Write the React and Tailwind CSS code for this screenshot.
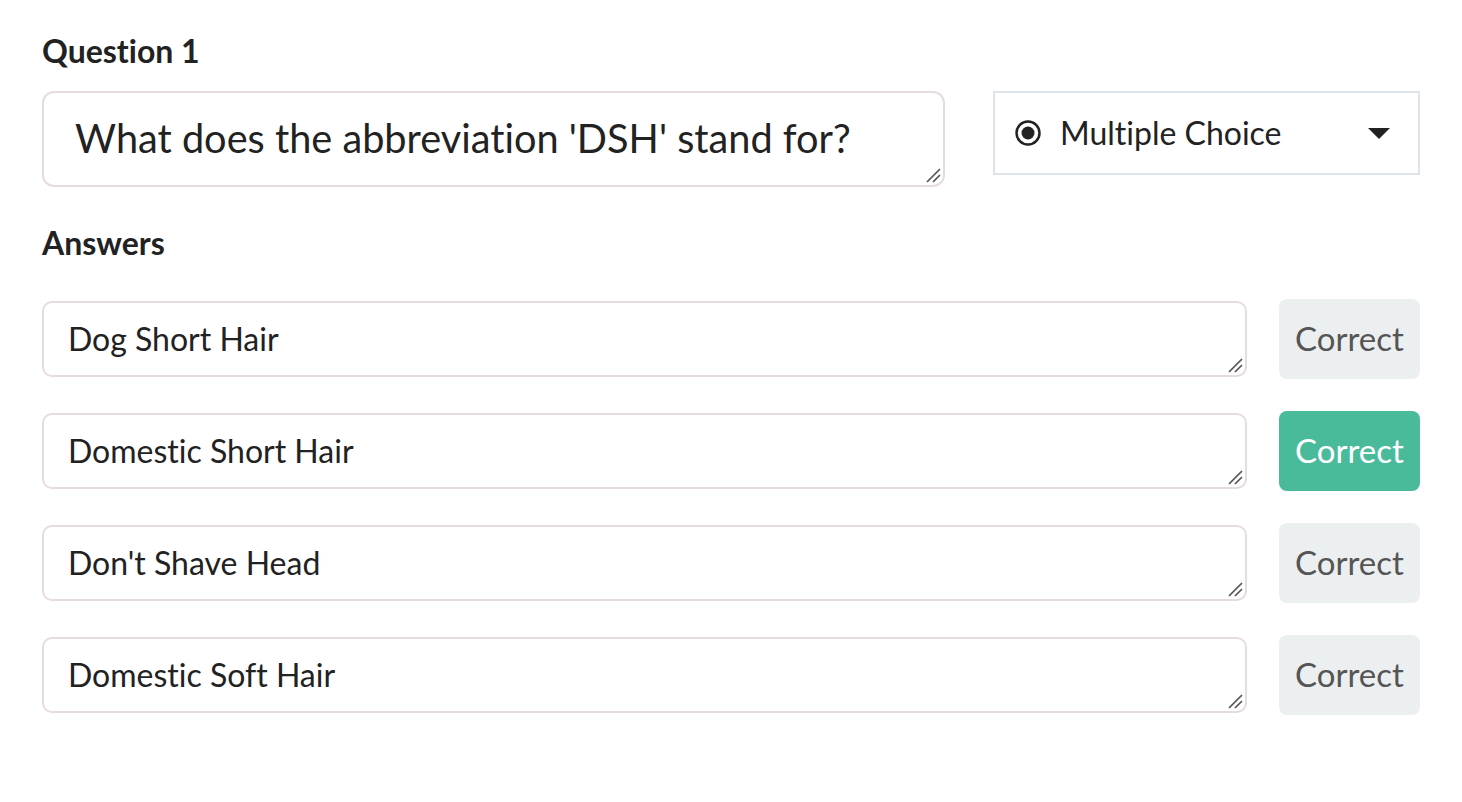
import { useState } from "react";

const answers = [
  { text: "Dog Short Hair", correct: false },
  { text: "Domestic Short Hair", correct: true },
  { text: "Don't Shave Head", correct: false },
  { text: "Domestic Soft Hair", correct: false },
];

// grip drawn at bottom-right like a textarea resize handle
const Grip = () => (
  <svg
    className="absolute right-[4px] bottom-[4px] pointer-events-none"
    width="16"
    height="16"
    viewBox="0 0 16 16"
  >
    <path d="M2 15L15 2M8 15L15 8" stroke="#555" strokeWidth="1.7" />
  </svg>
);

const AnswerRow = ({ answer, onPick }) => (
  <div className="flex items-center gap-8">
    <div className="relative flex-1">
      <textarea
        defaultValue={answer.text}
        className="block w-full h-[76px] resize-none rounded-[10px] border-2 border-[#e6dcdc] px-[24px] pt-[17px] text-[32px] leading-[38px] text-[#222] outline-none"
      />
      <Grip />
    </div>
    <button
      onClick={onPick}
      className={
        answer.correct
          ? "w-[141px] h-[80px] rounded-lg bg-[#49bb9b] text-[33px] text-white"
          : "w-[141px] h-[80px] rounded-lg bg-[#eceff0] text-[33px] text-[#555]"
      }
    >
      Correct
    </button>
  </div>
);

export default function App() {
  const [list, setList] = useState(answers);

  const pick = (i) =>
    setList(list.map((a, j) => ({ ...a, correct: i === j })));

  return (
    <div className="min-h-screen bg-white font-['Lato',sans-serif] [font-variant-ligatures:none] text-[#222] px-[42px] pt-[32px]">
      <h2 className="text-[32px] font-bold leading-[38px]">Question 1</h2>
      <div className="mt-[21px] flex items-start gap-12">
        <div className="relative w-[903px]">
          <textarea
            defaultValue="What does the abbreviation 'DSH' stand for?"
            className="block w-full h-[96px] resize-none rounded-xl border-2 border-[#e6dcdc] px-[31px] pt-[21px] text-[39.7px] leading-[48px] [font-variant-ligatures:none] outline-none"
          />
          <Grip />
        </div>
        <div className="flex-1 h-[84px] border-2 border-[#dfe4e8] flex items-center pl-[19px] pr-[28px]">
          <svg width="28" height="28" viewBox="0 0 28 28">
            <circle cx="14" cy="14" r="11.5" fill="none" stroke="#222" strokeWidth="2.5" />
            <circle cx="14" cy="14" r="6.5" fill="#222" />
          </svg>
          <span className="ml-[18px] text-[32px]">Multiple Choice</span>
          <svg className="ml-auto" width="22" height="11" viewBox="0 0 22 11">
            <path d="M0 0h22L11 11z" fill="#222" />
          </svg>
        </div>
      </div>
      <h3 className="mt-[37px] text-[32px] font-bold leading-[38px]">Answers</h3>
      <div className="mt-[37px] flex flex-col gap-8">
        {list.map((a, i) => (
          <AnswerRow key={i} answer={a} onPick={() => pick(i)} />
        ))}
      </div>
    </div>
  );
}
